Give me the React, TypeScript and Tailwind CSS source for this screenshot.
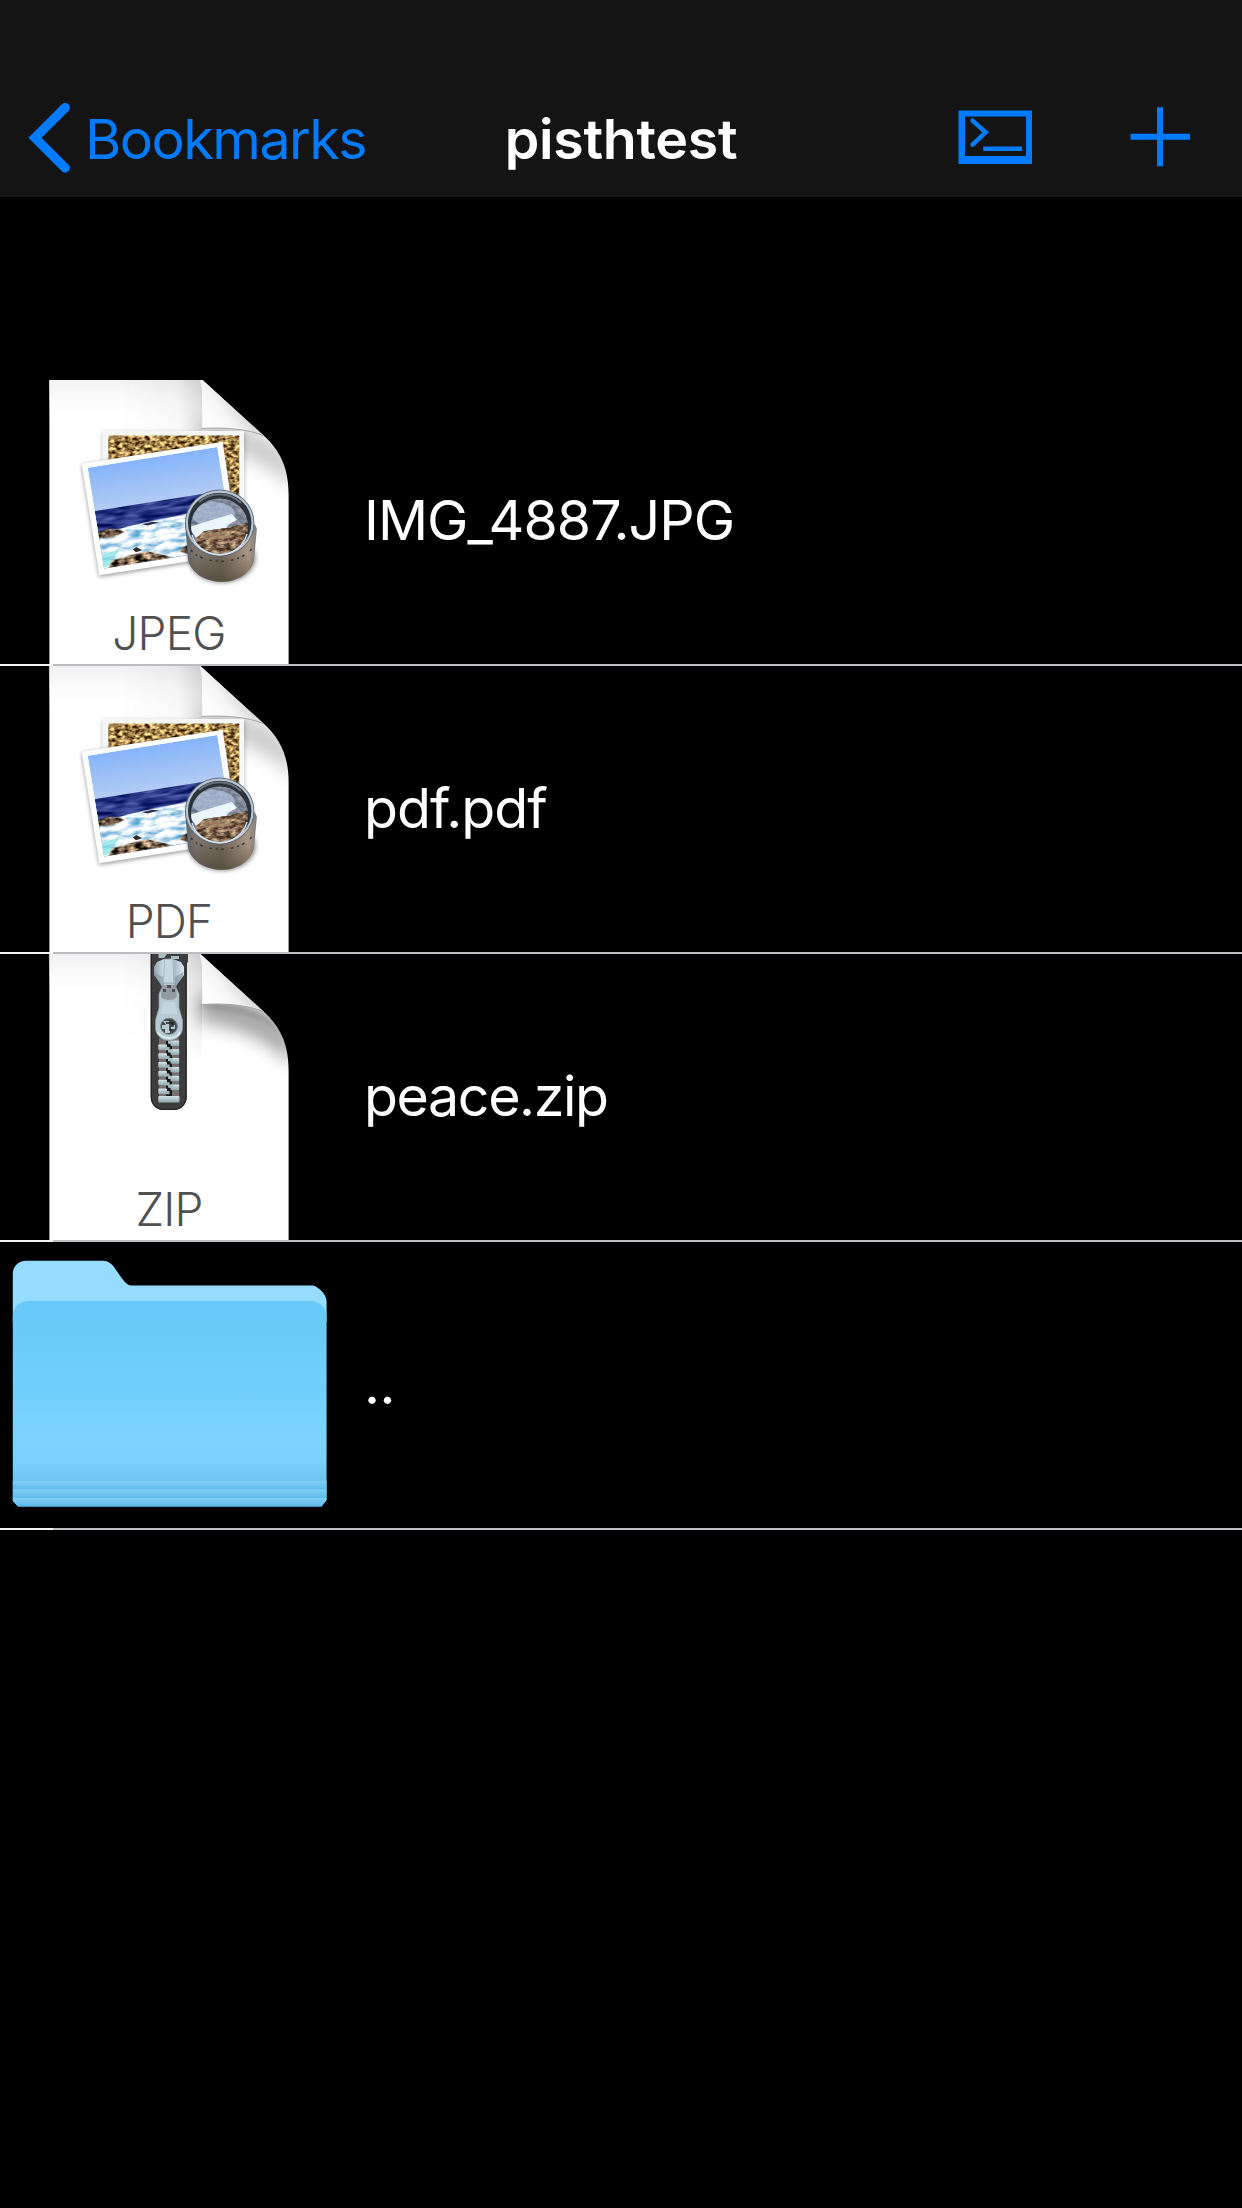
import type { ReactNode } from "react";

function BackChevron() {
  return (
    <svg className="ml-7 h-[76px] w-[46px] shrink-0" viewBox="0 0 46 76" fill="none">
      <path d="M37.2 8.6 L7 38.8 L37.2 69" stroke="#007aff" strokeWidth="9.4" strokeLinecap="round" strokeLinejoin="miter" />
    </svg>
  );
}

function TerminalIcon() {
  return (
    <svg className="h-[54px] w-[74px]" viewBox="0 0 74 54" fill="none">
      <path d="M0.5 0.5H74V54H0.5Z M7 6.5V46H68V6.5Z" fill="#007aff" fillRule="evenodd" />
      <path d="M14.6 10.6 L27.6 22.3 L14.6 34.6" stroke="#007aff" strokeWidth="4.6" strokeLinecap="round" />
      <path d="M25.3 38.7H64" stroke="#007aff" strokeWidth="4.6" />
    </svg>
  );
}

function PlusIcon() {
  return (
    <svg className="h-[60px] w-[60px]" viewBox="0 0 60 60" fill="none">
      <path d="M0.5 29.7H60 M30 0.3V59.2" stroke="#007aff" strokeWidth="6" />
    </svg>
  );
}

function Defs() {
  return (
    <svg className="absolute h-0 w-0">
      <defs>
        <linearGradient id="pageTop" x1="0" y1="0" x2="0" y2="1">
          <stop offset="0" stopColor="#f1f1f1" />
          <stop offset="1" stopColor="#ffffff" stopOpacity="0" />
        </linearGradient>
        <linearGradient id="pageSide" x1="0" y1="0" x2="1" y2="0">
          <stop offset="0" stopColor="#000" stopOpacity="0" />
          <stop offset="0.7" stopColor="#000" stopOpacity="0.04" />
          <stop offset="1" stopColor="#000" stopOpacity="0.16" />
        </linearGradient>
        <linearGradient id="fade" x1="0" y1="0" x2="0" y2="1">
          <stop offset="0" stopColor="#fff" />
          <stop offset="1" stopColor="#000" />
        </linearGradient>
        <mask id="fadeMask">
          <rect x="40" y="0" width="260" height="110" fill="url(#fade)" />
        </mask>
        <linearGradient id="flap" gradientUnits="userSpaceOnUse" x1="206" y1="44" x2="232" y2="24">
          <stop offset="0" stopColor="#ffffff" />
          <stop offset="0.6" stopColor="#f6f6f6" />
          <stop offset="1" stopColor="#dedede" />
        </linearGradient>
        <filter id="soft" x="-30%" y="-50%" width="160%" height="200%" colorInterpolationFilters="sRGB">
          <feGaussianBlur stdDeviation="9" />
        </filter>
        <filter id="shadow" x="-20%" y="-20%" width="140%" height="140%" colorInterpolationFilters="sRGB">
          <feGaussianBlur stdDeviation="2" />
        </filter>
        <filter id="gravel" x="0" y="0" width="100%" height="100%" colorInterpolationFilters="sRGB">
          <feTurbulence type="fractalNoise" baseFrequency="0.2 0.3" numOctaves="2" seed="4" />
          <feColorMatrix values="1.9 0 0 0 -0.32  1.75 0 0 0 -0.37  1.3 0 0 0 -0.36  0 0 0 0 1" />
          <feComposite in2="SourceGraphic" operator="in" />
        </filter>
        <filter id="rock" x="0" y="0" width="100%" height="100%" colorInterpolationFilters="sRGB">
          <feTurbulence type="fractalNoise" baseFrequency="0.16 0.3" numOctaves="3" seed="9" />
          <feColorMatrix values="1.9 0 0 0 -0.48  1.7 0 0 0 -0.47  1.4 0 0 0 -0.4  0 0 0 0 1" />
          <feComposite in2="SourceGraphic" operator="in" />
        </filter>
        <filter id="foam" x="0" y="0" width="100%" height="100%" colorInterpolationFilters="sRGB">
          <feTurbulence type="fractalNoise" baseFrequency="0.09 0.22" numOctaves="3" seed="12" />
          <feColorMatrix values="1.6 0 0 0 0.08  0.9 0 0 0 0.49  0.5 0 0 0 0.73  0 0 0 0 1" />
          <feComposite in2="SourceGraphic" operator="in" />
        </filter>
        <filter id="sea" x="0" y="0" width="100%" height="100%" colorInterpolationFilters="sRGB">
          <feTurbulence type="fractalNoise" baseFrequency="0.06 0.25" numOctaves="2" seed="3" />
          <feColorMatrix values="0.7 0 0 0 -0.2  0.7 0 0 0 -0.14  0.7 0 0 0 0.16  0 0 0 0 1" />
          <feComposite in2="SourceGraphic" operator="in" />
        </filter>
        <linearGradient id="sky" x1="0" y1="0" x2="0" y2="1">
          <stop offset="0" stopColor="#86b4fb" />
          <stop offset="1" stopColor="#b4cdf3" />
        </linearGradient>
        <linearGradient id="barrel" x1="0" y1="0" x2="1" y2="0">
          <stop offset="0" stopColor="#5d6570" />
          <stop offset="0.15" stopColor="#7d746b" />
          <stop offset="0.5" stopColor="#6f6558" />
          <stop offset="0.88" stopColor="#a89784" />
          <stop offset="1" stopColor="#7a7d80" />
        </linearGradient>
        <linearGradient id="barrelShade" x1="0" y1="0" x2="0" y2="1">
          <stop offset="0.6" stopColor="#3f3629" stopOpacity="0" />
          <stop offset="1" stopColor="#3f3629" stopOpacity="0.5" />
        </linearGradient>
        <linearGradient id="metal" x1="0" y1="0" x2="1" y2="0">
          <stop offset="0" stopColor="#8fa3ad" />
          <stop offset="0.35" stopColor="#d4e3ea" />
          <stop offset="0.7" stopColor="#a9bcc5" />
          <stop offset="1" stopColor="#d9e8ee" />
        </linearGradient>
        <linearGradient id="tooth" x1="0" y1="0" x2="0" y2="1">
          <stop offset="0" stopColor="#d3e5ea" />
          <stop offset="1" stopColor="#8fa5ab" />
        </linearGradient>
        <linearGradient id="folder" x1="0" y1="0" x2="0" y2="1">
          <stop offset="0" stopColor="#65c8f7" />
          <stop offset="0.7" stopColor="#7bd4fd" />
          <stop offset="0.78" stopColor="#78d1fa" />
          <stop offset="0.87" stopColor="#6ec5ef" />
          <stop offset="1" stopColor="#66bfec" />
        </linearGradient>
        <linearGradient id="fold" x1="0" y1="0" x2="0" y2="1">
          <stop offset="0" stopColor="#83d0f5" />
          <stop offset="0.35" stopColor="#74c7f1" />
          <stop offset="1" stopColor="#5dbaec" />
        </linearGradient>
        <clipPath id="pageClip">
          <path d="M49.4 0H200L263 57C280 72 288.6 90 288.6 116V288H49.4Z" />
        </clipPath>
        <clipPath id="photoClip">
          <rect width="100" height="100" />
        </clipPath>
        <clipPath id="lensClip">
          <ellipse cx="219.5" cy="148" rx="28.5" ry="27.5" />
        </clipPath>
      </defs>
    </svg>
  );
}

function Page({ label, strong, first, children }: { label: string; strong?: boolean; first?: boolean; children: ReactNode }) {
  return (
    <svg className="h-[288px] w-[340px] shrink-0" viewBox="0 0 340 288">
      <g clipPath="url(#pageClip)">
        <rect x="49" width="240" height="288" fill="#fff" />
        <rect x="49" width="240" height="44" fill="url(#pageTop)" />
        <g mask="url(#fadeMask)">
          <rect x="120" y="0" width="82" height="110" fill="url(#pageSide)" />
        </g>
        <path
          d="M198 42C230 42 262 50 294 80L294 112C270 88 240 72 200 68Z"
          fill="#000"
          opacity={strong ? 0.36 : 0.2}
          filter="url(#soft)"
        />
        {strong && <path d="M202 48C227 47 250 50 268 62L282 80C262 64 238 56 202 55Z" fill="#000" opacity="0.14" filter="url(#shadow)" />}
      </g>
      {children}
      <path d="M199.5 0C203 12 204 28 201.8 50.5C225 49 247 51 263.5 57.5L200.5 0Z" fill="url(#flap)" />
      <path d="M201.8 50.5C225 49 247 51 263.5 57.5" stroke="#a5a5a5" strokeWidth="1" fill="none" />
      {first && <rect width="340" height="2" fill="#000" />}
      <text x="169" y="272.4" textAnchor="middle" fill="#505050" fontSize="46" fontWeight="300" fontFamily="Inter, sans-serif" letterSpacing="-0.8">
        {label}
      </text>
    </svg>
  );
}

function PreviewArt() {
  return (
    <g>
      <rect x="102" y="54" width="143" height="100" fill="#000" opacity="0.2" filter="url(#shadow)" />
      <rect x="102.7" y="53" width="141.3" height="100" fill="#f7f7f7" />
      <rect x="108.3" y="57.5" width="131" height="92" fill="#a4834a" filter="url(#gravel)" />
      <path d="M81.7 87L222.7 66L239 177L99.3 199Z" fill="#000" opacity="0.4" filter="url(#shadow)" />
      <path d="M81.7 85.7L222.7 63.7L239 175.5L99.3 197.3Z" fill="#fff" />
      <g transform="matrix(1.296 -0.207 0.163 1.01 87.7 89.7)">
        <g clipPath="url(#photoClip)">
          <rect width="100" height="46" fill="url(#sky)" />
          <rect y="43" width="100" height="57" fill="#26377e" filter="url(#sea)" />
          <path d="M0 67L22 63L45 61L65 60L100 55V100H0Z" fill="#fff" filter="url(#foam)" />
          <path d="M0 64L8 62L17 65L20 68L10 71L0 70Z" fill="#333" filter="url(#rock)" />
          <path d="M34 63L42 62L47 64L38 65Z" fill="#2c3050" />
          <path d="M0 86L14 84L4 98L0 99Z" fill="#7fe0e2" opacity="0.7" />
          <path d="M24 86L27 84L31 88L26 89Z" fill="#332a2a" />
          <path d="M3 100L8 93L22 91L35 90L50 98L52 100Z" fill="#8a6a48" filter="url(#rock)" />
          <path d="M58 94L66 90L72 84L100 82V100H66Z" fill="#544b50" filter="url(#rock)" />
        </g>
      </g>
      <ellipse cx="222" cy="180" rx="34" ry="25" fill="#000" opacity="0.4" filter="url(#shadow)" />
      <path d="M185.3 148L188 182C192 196 206 203.8 222 203.8C238 203.8 251 195 254 182L256.8 152C256 130 186 130 185.3 148Z" fill="url(#barrel)" />
      <path d="M185.3 148L188 182C192 196 206 203.8 222 203.8C238 203.8 251 195 254 182L256.8 152C256 130 186 130 185.3 148Z" fill="url(#barrelShade)" />
      <path d="M191 172C201 186 240 189 253 169" stroke="#37322d" strokeWidth="1.4" strokeDasharray="2.5 4 2 3 3 7" fill="none" />
      <ellipse cx="219.7" cy="145" rx="34.3" ry="33" fill="#2c333c" />
      <ellipse cx="219.7" cy="145" rx="33" ry="31.6" fill="none" stroke="#b6c4d3" strokeWidth="2.6" />
      <ellipse cx="219.7" cy="145" rx="34.3" ry="33" fill="none" stroke="#5b6470" strokeWidth="0.8" />
      <g clipPath="url(#lensClip)">
        <rect x="190" y="118" width="60" height="60" fill="#8494b4" />
        <rect x="190" y="118" width="60" height="60" fill="#fff" filter="url(#rock)" opacity="0.25" />
        <ellipse cx="213" cy="136" rx="22" ry="12" fill="#b9cbe8" opacity="0.6" />
        <path d="M189 149L205 144L232 136L237 142L228 147L224 155L196 160Z" fill="#eaf6fc" />
        <path d="M194 162L204 153L226 150L248 145V178H194Z" fill="#8a6c50" filter="url(#rock)" />
        <path d="M194 162L204 153L226 150L248 145V178H194Z" fill="#8f7154" opacity="0.4" />
        <path d="M200 156L224 154L236 158L222 162L203 160Z" fill="#b39473" opacity="0.6" />
      </g>
      <path d="M192 157A28.5 27.5 0 0 0 247 156" stroke="#d7e6ef" strokeWidth="1.3" fill="none" />
      <path d="M199 124A30 29 0 0 1 241 125" stroke="#67717c" strokeWidth="2" fill="none" />
    </g>
  );
}

const TEETH = [0, 1, 2, 3, 4, 5];

function ZipperArt() {
  return (
    <g>
      <path d="M150.7 0H188V8L186.7 9V143C186.7 150 181 156 174 156H163C156 156 150.7 150 150.7 143Z" fill="#3d3d40" />
      <path d="M151.3 0V143C151.3 150 157 155.4 163 155.4H174C181 155.4 186.1 150 186.1 143V9" stroke="#242427" strokeWidth="1.2" fill="none" />
      <rect x="159" y="84" width="20" height="60" fill="#77706f" />
      <path d="M169 84V144" stroke="#17191b" strokeWidth="6" />
      {TEETH.map((i) => (
        <g key={i}>
          <rect x="158.3" y={90.5 + i * 8.8} width="8.7" height="5.6" rx="0.8" fill="url(#tooth)" />
          <rect x="165" y={93 + i * 8.8} width="4.6" height="3.2" rx="0.6" fill="#9db5bd" />
          <rect x="170.5" y={86.5 + i * 8.8} width="8.7" height="5.6" rx="0.8" fill="url(#tooth)" />
          <rect x="168" y={86.5 + i * 8.8} width="4.8" height="3.2" rx="0.6" fill="#a9c0c7" />
        </g>
      ))}
      <rect x="158.3" y="142" width="21.2" height="6.5" rx="1" fill="url(#tooth)" />
      <path d="M158.5 0H167L164 4H158.5Z M171 2H179V5H171Z" fill="#a6bec7" />
      <path d="M157 8L164 5H173L181 8L184 13V21L178 29L173 37H164L160 29L154 21V13Z" fill="url(#metal)" />
      <path d="M154 18L163 23V34L155 22Z M183.5 18L175 23V34L183 22Z" fill="#7e929c" opacity="0.6" />
      <path d="M164.5 5H173L174 30L171 35H166L163.5 30Z" fill="#c6d9e0" stroke="#9babb4" strokeWidth="0.8" />
      <path d="M164 29H174L179 40V54L182.5 66V74C182.5 81 176 86.5 169 86.5C162 86.5 155.5 81 155.5 74V66L159 54V40Z" fill="#b7cad2" stroke="#8a9ca5" strokeWidth="0.8" />
      <path d="M162 31H176L177 43C173 47 165 47 161 43Z" fill="#83888a" opacity="0.7" />
      <path d="M163 35h3v3h-3Z M172 35h3v3h-3Z M167 31h4v3h-4Z" fill="#4d5356" />
      <path d="M163 48H175L177 60H161Z" fill="#cbdce3" opacity="0.65" />
      <ellipse cx="169" cy="72.3" rx="8.4" ry="8" fill="#42484b" stroke="#75858d" strokeWidth="1" />
      <path d="M163 67H169V71H175V75H170V79H165V75H162V71H166Z" fill="#b5cad1" />
      <path d="M165.8 69H173V72H170V76H172" stroke="#202325" strokeWidth="1.4" fill="none" />
      <path d="M158 78C162 86 176 86 180 78" stroke="#dcebf1" strokeWidth="1.8" fill="none" />
    </g>
  );
}

function FolderIcon() {
  return (
    <svg className="h-[288px] w-[340px] shrink-0" viewBox="0 0 340 288">
      <path
        d="M12.8 32C12.8 24 19 18.8 26 18.8H103C108 18.8 112 22 115 26.5L122 36.5C125 40.5 128 43.5 131 43.5H313C319 45 326.6 53 326.6 59V80H12.8Z"
        fill="#95dcff"
      />
      <path d="M12.8 75C12.8 65 20 59 29 59H310C319 59 326.6 65 326.6 75V258L321.5 264.6H18L12.8 259Z" fill="url(#folder)" />
      <path d="M12.8 239H326.6V247.5H12.8Z" fill="url(#fold)" />
      <path d="M12.8 247.5H326.6V256H12.8Z" fill="url(#fold)" />
      <path d="M12.8 256H326.6V258L321.5 264.6H18L12.8 259Z" fill="url(#fold)" />
      <path d="M18 264.2H321.5" stroke="#3f8fba" strokeWidth="0.8" />
    </svg>
  );
}

function Row({ icon, name, tracking }: { icon: ReactNode; name: string; tracking: string }) {
  return (
    <li className="relative flex h-[288px] items-center">
      {icon}
      <span className={`mb-1 ml-6 text-[55.5px] leading-none whitespace-nowrap text-white ${tracking}`}>{name}</span>
      <div className="absolute inset-x-0 bottom-0 flex h-[2px]">
        <div className="w-[53px] bg-[#f7f7f7]" />
        <div className="flex-1 bg-[#bcbcc1]" />
      </div>
    </li>
  );
}

export default function App() {
  return (
    <div className="flex h-[2208px] w-[1242px] flex-col overflow-hidden bg-black font-['Inter',sans-serif]">
      <Defs />
      <header className="grid h-[197px] shrink-0 grid-cols-[1fr_auto_1fr] items-center bg-[#141414] pt-[77px] text-[55.5px] leading-none">
        <button className="flex h-[76px] items-center self-center text-[#007aff]">
          <BackChevron />
          <span className="ml-[11px] pt-[3px] tracking-[-1.5px]">Bookmarks</span>
        </button>
        <h1 className="pt-[3px] font-semibold tracking-[-0.3px] text-white">pisthtest</h1>
        <div className="flex items-center justify-end gap-[98px] pr-[52px]">
          <TerminalIcon />
          <PlusIcon />
        </div>
      </header>
      <ul className="mt-[181px]">
        <Row icon={<Page label="JPEG" first><PreviewArt /></Page>} name="IMG_4887.JPG" tracking="tracking-[-1px]" />
        <Row icon={<Page label="PDF"><PreviewArt /></Page>} name="pdf.pdf" tracking="tracking-[-1px]" />
        <Row icon={<Page label="ZIP" strong><ZipperArt /></Page>} name="peace.zip" tracking="tracking-[-1.4px]" />
        <Row icon={<FolderIcon />} name=".." tracking="tracking-[-0.5px]" />
      </ul>
    </div>
  );
}
